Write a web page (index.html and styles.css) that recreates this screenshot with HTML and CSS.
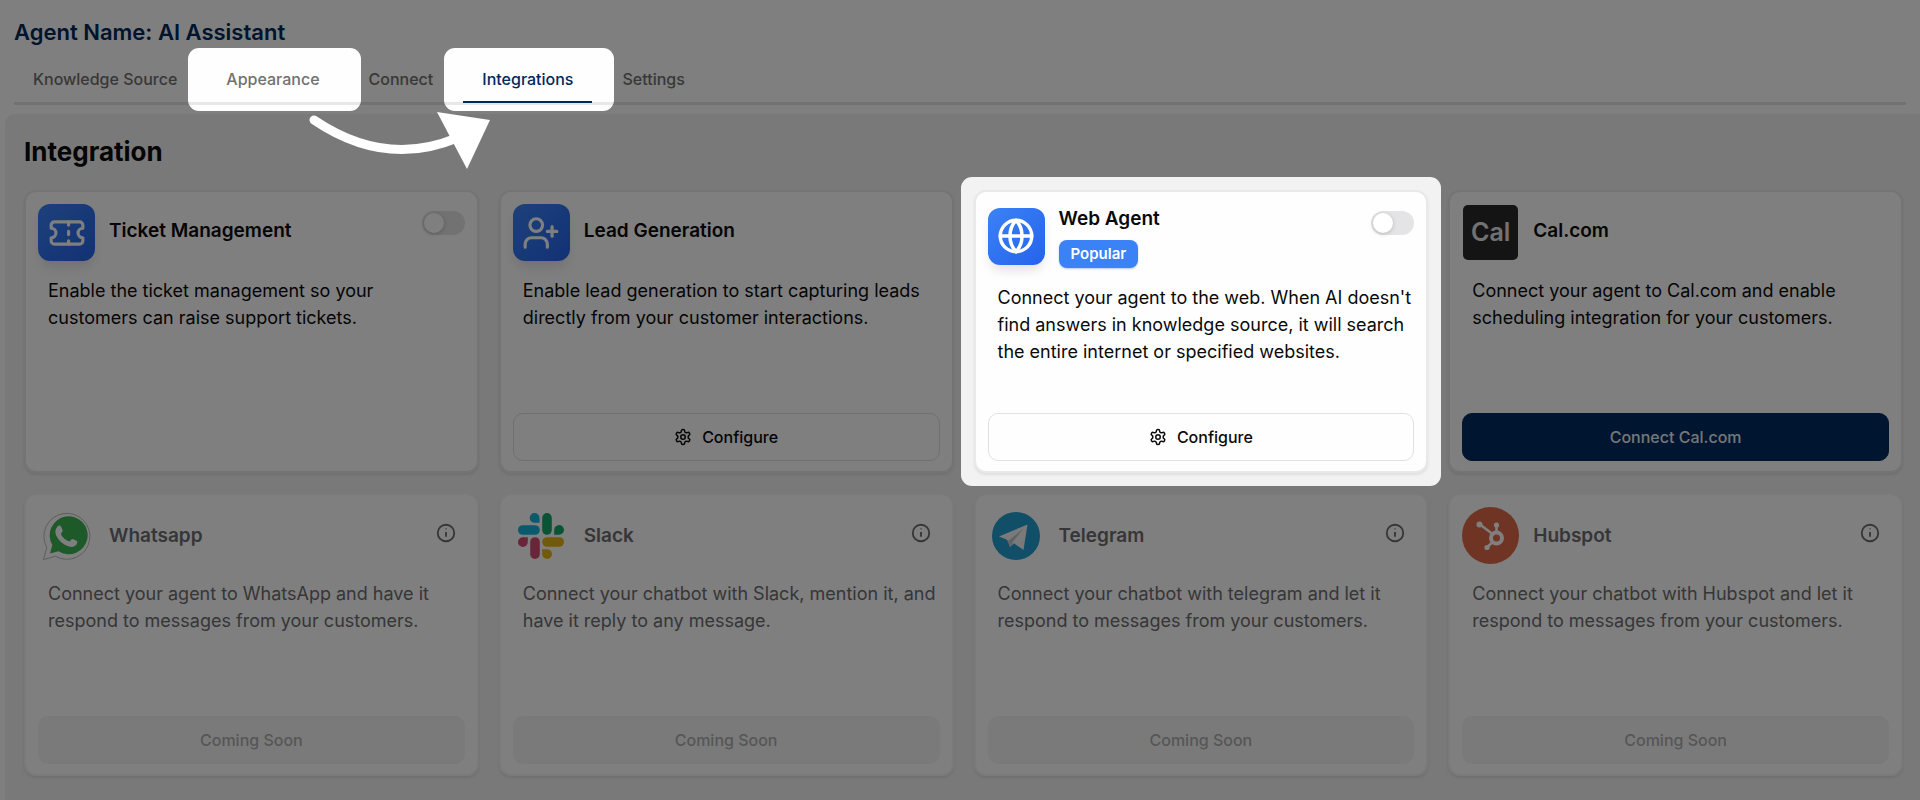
FILE: index.html
```html
<!DOCTYPE html>
<html lang="en">
<head>
    <meta charset="UTF-8">
    <meta name="viewport" content="width=device-width, initial-scale=1.0">
    <title>AI Assistant - Integrations</title>
    <link rel="stylesheet" href="styles.css">
</head>
<body>
    <div class="page">
        <header class="top">
            <h1>Agent Name: AI Assistant</h1>
            <nav class="tabs">
                <a href="#knowledge" class="tab">Knowledge Source</a>
                <a href="#appearance" class="tab lit">Appearance</a>
                <a href="#connect" class="tab">Connect</a>
                <a href="#integrations" class="tab lit active">Integrations</a>
                <a href="#settings" class="tab">Settings</a>
                <svg class="arrow" width="190" height="64" viewBox="0 0 190 64" fill="#fff" aria-hidden="true">
                    <path d="M9 12Q80 60 152 30" fill="none" stroke="#fff" stroke-width="9" stroke-linecap="round"/>
                    <path d="M132 4L185 12L162 61Z"/>
                </svg>
            </nav>
        </header>

        <main class="panel">
            <h2>Integration</h2>
            <div class="grid">
                <section class="card">
                    <div class="card-head">
                        <span class="icon blue">
                            <svg class="line" width="38" height="38" viewBox="0 0 24 24"><path d="M2 9a3 3 0 0 1 0 6v2a2 2 0 0 0 2 2h16a2 2 0 0 0 2-2v-2a3 3 0 0 1 0-6V7a2 2 0 0 0-2-2H4a2 2 0 0 0-2 2Z"/><path d="M13 5v2M13 17v2M13 11v2"/></svg>
                        </span>
                        <h3>Ticket Management</h3>
                        <input type="checkbox" class="toggle" aria-label="Enable Ticket Management">
                    </div>
                    <p>Enable the ticket management so your customers can raise support tickets.</p>
                </section>

                <section class="card">
                    <div class="card-head">
                        <span class="icon blue">
                            <svg class="line" width="38" height="38" viewBox="0 0 24 24"><path d="M16 21v-2a4 4 0 0 0-4-4H6a4 4 0 0 0-4 4v2"/><circle cx="9" cy="7" r="4"/><path d="M19 8v6M22 11h-6"/></svg>
                        </span>
                        <h3>Lead Generation</h3>
                    </div>
                    <p>Enable lead generation to start capturing leads directly from your customer interactions.</p>
                    <button type="button" class="btn">
                        <svg class="gear" width="18" height="18" viewBox="0 0 24 24"><path d="M12.22 2h-.44a2 2 0 0 0-2 2v.18a2 2 0 0 1-1 1.73l-.43.25a2 2 0 0 1-2 0l-.15-.08a2 2 0 0 0-2.73.73l-.22.38a2 2 0 0 0 .73 2.73l.15.1a2 2 0 0 1 1 1.72v.51a2 2 0 0 1-1 1.74l-.15.09a2 2 0 0 0-.73 2.73l.22.38a2 2 0 0 0 2.73.73l.15-.08a2 2 0 0 1 2 0l.43.25a2 2 0 0 1 1 1.73V20a2 2 0 0 0 2 2h.44a2 2 0 0 0 2-2v-.18a2 2 0 0 1 1-1.73l.43-.25a2 2 0 0 1 2 0l.15.08a2 2 0 0 0 2.73-.73l.22-.39a2 2 0 0 0-.73-2.73l-.15-.08a2 2 0 0 1-1-1.74v-.5a2 2 0 0 1 1-1.74l.15-.09a2 2 0 0 0 .73-2.73l-.22-.38a2 2 0 0 0-2.73-.73l-.15.08a2 2 0 0 1-2 0l-.43-.25a2 2 0 0 1-1-1.73V4a2 2 0 0 0-2-2z"/><circle cx="12" cy="12" r="3"/></svg>
                        Configure
                    </button>
                </section>

                <div class="spotlight">
                    <section class="card">
                        <div class="card-head">
                            <span class="icon blue">
                                <svg class="line" width="42" height="42" viewBox="0 0 24 24"><circle cx="12" cy="12" r="9"/><path d="M3 12h18M12 3c-4.600 5-4.600 13 0 18M12 3c4.600 5 4.600 13 0 18"/></svg>
                            </span>
                            <div class="title-stack">
                                <h3>Web Agent</h3>
                                <span class="badge">Popular</span>
                            </div>
                            <input type="checkbox" class="toggle" aria-label="Enable Web Agent">
                        </div>
                        <p>Connect your agent to the web. When AI doesn't find answers in knowledge source, it will search the entire internet or specified websites.</p>
                        <button type="button" class="btn">
                            <svg class="gear" width="18" height="18" viewBox="0 0 24 24"><path d="M12.22 2h-.44a2 2 0 0 0-2 2v.18a2 2 0 0 1-1 1.73l-.43.25a2 2 0 0 1-2 0l-.15-.08a2 2 0 0 0-2.73.73l-.22.38a2 2 0 0 0 .73 2.73l.15.1a2 2 0 0 1 1 1.72v.51a2 2 0 0 1-1 1.74l-.15.09a2 2 0 0 0-.73 2.73l.22.38a2 2 0 0 0 2.73.73l.15-.08a2 2 0 0 1 2 0l.43.25a2 2 0 0 1 1 1.73V20a2 2 0 0 0 2 2h.44a2 2 0 0 0 2-2v-.18a2 2 0 0 1 1-1.73l.43-.25a2 2 0 0 1 2 0l.15.08a2 2 0 0 0 2.73-.73l.22-.39a2 2 0 0 0-.73-2.73l-.15-.08a2 2 0 0 1-1-1.74v-.5a2 2 0 0 1 1-1.74l.15-.09a2 2 0 0 0 .73-2.73l-.22-.38a2 2 0 0 0-2.73-.73l-.15.08a2 2 0 0 1-2 0l-.43-.25a2 2 0 0 1-1-1.73V4a2 2 0 0 0-2-2z"/><circle cx="12" cy="12" r="3"/></svg>
                            Configure
                        </button>
                    </section>
                </div>

                <section class="card">
                    <div class="card-head">
                        <span class="icon"><span class="cal">Cal</span></span>
                        <h3>Cal.com</h3>
                    </div>
                    <p>Connect your agent to Cal.com and enable scheduling integration for your customers.</p>
                    <button type="button" class="btn primary">Connect Cal.com</button>
                </section>

                <section class="card soon">
                    <div class="card-head">
                        <span class="icon">
                            <svg width="48" height="48" viewBox="0 0 48 48">
                                <path d="M.5 47.500L3.800 35.500A23 23 0 1 1 12.500 44.300Z" fill="#fff" stroke="#bcbcbc" stroke-width="1"/>
                                <path d="M7 41.500l2.300-8.600A19 19 0 1 1 15.500 39.300Z" fill="#3cb553"/>
                                <path d="M14.500 14.500c1.500-1.700 3-1.200 3.500-.1l1.700 4c.4 1-1.700 2.700-1.900 3.600 1.900 3.800 4.600 6.100 8.500 7.500 1-.3 2.300-2.900 3.400-2.500l4.200 2.100c1 .6.100 3.400-1.400 4.500-2.800 2-5.600 1.400-9.100-.1-5.300-2.300-9.300-7-10.700-11.500-.7-2.700-.2-5.500 1.800-7.500z" fill="#fff"/>
                            </svg>
                        </span>
                        <h3>Whatsapp</h3>
                        <svg class="info" width="22" height="22" viewBox="0 0 24 24"><circle cx="12" cy="12" r="9"/><path d="M12 11v5M12 7v1"/></svg>
                    </div>
                    <p>Connect your agent to WhatsApp and have it respond to messages from your customers.</p>
                    <button type="button" class="btn" disabled>Coming Soon</button>
                </section>

                <section class="card soon">
                    <div class="card-head">
                        <span class="icon">
                            <svg width="46" height="46" viewBox="0 0 46 46">
                                <g fill="#16b2d8"><path d="M21.500 9.800h-4.800a4.900 4.900 0 1 1 4.800-4.900z"/><rect y="12.200" width="21.800" height="9.600" rx="4.800"/></g>
                                <g fill="#12a868"><path d="M36.200 21.800V17a4.900 4.900 0 1 1 4.900 4.800z"/><rect x="24.200" width="9.600" height="21.800" rx="4.800"/></g>
                                <g fill="#e3b616"><path d="M24.200 36.200H29a4.900 4.900 0 1 1-4.800 4.900z"/><rect x="24.200" y="24.200" width="21.800" height="9.600" rx="4.800"/></g>
                                <g fill="#d24c72"><path d="M9.800 24.200V29a4.900 4.900 0 1 1-4.900-4.800z"/><rect x="12.200" y="24.200" width="9.600" height="21.800" rx="4.800"/></g>
                            </svg>
                        </span>
                        <h3>Slack</h3>
                        <svg class="info" width="22" height="22" viewBox="0 0 24 24"><circle cx="12" cy="12" r="9"/><path d="M12 11v5M12 7v1"/></svg>
                    </div>
                    <p>Connect your chatbot with Slack, mention it, and have it reply to any message.</p>
                    <button type="button" class="btn" disabled>Coming Soon</button>
                </section>

                <section class="card soon">
                    <div class="card-head">
                        <span class="icon">
                            <svg width="48" height="48" viewBox="0 0 48 48">
                                <circle cx="24" cy="24" r="24" fill="#229dcf"/>
                                <path d="M14 26l4 9 6-5z" fill="#b9cbd8"/>
                                <path d="M7 24.500L35.500 12.500 31.500 38 21.500 31 18 35 17 28.500z" fill="#f4f4f4"/>
                                <path d="M17 28.500L32 16 20.500 30 18.500 35.500z" fill="#b9c4cc"/>
                            </svg>
                        </span>
                        <h3>Telegram</h3>
                        <svg class="info" width="22" height="22" viewBox="0 0 24 24"><circle cx="12" cy="12" r="9"/><path d="M12 11v5M12 7v1"/></svg>
                    </div>
                    <p>Connect your chatbot with telegram and let it respond to messages from your customers.</p>
                    <button type="button" class="btn" disabled>Coming Soon</button>
                </section>

                <section class="card soon">
                    <div class="card-head">
                        <span class="icon">
                            <svg width="57" height="57" viewBox="0 0 57 57">
                                <circle cx="28.500" cy="28.500" r="28.500" fill="#e0694b"/>
                                <g fill="none" stroke="#fff">
                                    <circle cx="34.500" cy="31" r="5.500" stroke-width="4"/>
                                    <path d="M18 17.500L30.500 27M34.500 18v8M30 35.500L25 40.500" stroke-width="2.500"/>
                                </g>
                                <g fill="#fff"><circle cx="17.500" cy="17.500" r="3"/><circle cx="34.500" cy="18" r="2.600"/><circle cx="25" cy="40.500" r="2.600"/></g>
                            </svg>
                        </span>
                        <h3>Hubspot</h3>
                        <svg class="info" width="22" height="22" viewBox="0 0 24 24"><circle cx="12" cy="12" r="9"/><path d="M12 11v5M12 7v1"/></svg>
                    </div>
                    <p>Connect your chatbot with Hubspot and let it respond to messages from your customers.</p>
                    <button type="button" class="btn" disabled>Coming Soon</button>
                </section>
            </div>
        </main>
    </div>
</body>
</html>
```
FILE: styles.css
```css
* {
    box-sizing: border-box;
}
body {
    margin: 0;
    font-family: Inter, "Open Sans", sans-serif;
    color: #0a0a0a;
    background: #fefefe;
}
h1, h2, h3, p {
    margin: 0;
}
.page {
    position: relative;
    min-height: 100vh;
    display: flex;
    flex-direction: column;
}
/* dims everything that is not spotlighted */
.page::after {
    content: "";
    position: absolute;
    inset: 0;
    background: rgba(0, 0, 0, 0.5);
    z-index: 1;
}

.top {
    padding: 16px 14px 9px;
}
.top h1 {
    font-size: 22px;
    line-height: 32px;
    font-weight: 600;
    color: #00285c;
}
.tabs {
    position: relative;
    display: flex;
    gap: 11px;
    margin-top: 8px;
    border-bottom: 3px solid #e4e4e4;
}
.tab {
    position: relative;
    padding: 11px 19px;
    font-size: 16px;
    line-height: 24px;
    font-weight: 500;
    color: #717171;
    text-decoration: none;
}
.tab.lit {
    z-index: 2;
}
.tab.lit::before {
    content: "";
    position: absolute;
    inset: -8px -22px -9px -19px;
    z-index: -1;
    border-radius: 11px;
    background: linear-gradient(#e8e8e8, #e8e8e8) 0 calc(100% - 6px) / 100% 3px no-repeat #fefefe;
}
.tab.active {
    color: #00285c;
}
.tab.active::after {
    content: "";
    position: absolute;
    left: 0;
    right: 0;
    bottom: -1px;
    height: 2px;
    background: #002b57;
}
.arrow {
    position: absolute;
    left: 291px;
    top: 52px;
    z-index: 3;
}

.panel {
    flex: 1;
    margin-left: 5px;
    padding: 20px 17px 24px 19px;
    background: #f2f2f2;
    border-radius: 10px 0 0 0;
}
.panel h2 {
    font-size: 26px;
    line-height: 36px;
    font-weight: 700;
}
.grid {
    display: grid;
    grid-template-columns: repeat(4, minmax(0, 1fr));
    grid-auto-rows: minmax(283px, auto);
    gap: 20px;
    margin-top: 20px;
}
.card {
    display: flex;
    flex-direction: column;
    height: 100%;
    padding: 12px 12px 10px;
    border: 2px solid #e9e9eb;
    border-radius: 12px;
    background: #fefefe;
    box-shadow: 0 2px 3px rgba(0, 0, 0, 0.08);
}
.spotlight {
    position: relative;
    z-index: 2;
}
.spotlight::before {
    content: "";
    position: absolute;
    inset: -13px;
    z-index: -1;
    border-radius: 11px;
    background: #f2f2f2;
}

.card-head {
    display: flex;
    align-items: center;
    gap: 14px;
    min-height: 57px;
}
.card-head h3 {
    font-size: 19px;
    line-height: 30px;
    font-weight: 600;
}
.card-head > h3 {
    padding-bottom: 4px;
}
.icon {
    display: flex;
    align-items: center;
    justify-content: center;
    flex: none;
    width: 57px;
    height: 57px;
}
.blue {
    border-radius: 12px;
    background: linear-gradient(135deg, #3b82f6, #2563eb);
    box-shadow: 0 8px 12px -3px rgba(0, 0, 0, 0.12);
}
.line {
    fill: none;
    stroke: #fff;
    stroke-width: 2;
    stroke-linecap: round;
    stroke-linejoin: round;
}
.cal {
    width: 55px;
    height: 55px;
    border-radius: 5px;
    background: #292929;
    color: #e4e4e4;
    font-size: 25px;
    line-height: 55px;
    font-weight: 600;
    text-align: center;
}
.title-stack {
    display: flex;
    flex-direction: column;
    align-items: flex-start;
    gap: 6px;
}
.badge {
    padding: 0 12px;
    border-radius: 8px;
    background: #3b82f6;
    color: #fff;
    font-size: 15px;
    line-height: 28px;
    font-weight: 600;
    box-shadow: 0 1px 2px rgba(59, 130, 246, 0.4);
}
.toggle {
    appearance: none;
    align-self: flex-start;
    width: 43px;
    height: 24px;
    margin: 7px 0 0 auto;
    padding: 2px;
    border-radius: 12px;
    background: #e4e4e7;
}
.toggle::before {
    content: "";
    display: block;
    width: 20px;
    height: 20px;
    border-radius: 50%;
    background: #fff;
    box-shadow: 0 1px 4px rgba(0, 0, 0, 0.2);
}
.toggle:checked {
    background: #2563eb;
}
.toggle:checked::before {
    margin-left: auto;
}
.info {
    align-self: flex-start;
    margin: 15px 8px 0 auto;
    fill: none;
    stroke: #171717;
    stroke-width: 2;
}

.card p {
    padding: 16px 0 0 10px;
    font-size: 18px;
    line-height: 27px;
}
.btn {
    display: flex;
    align-items: center;
    justify-content: center;
    gap: 10px;
    height: 48px;
    margin-top: auto;
    border: 1px solid #e1e1e4;
    border-radius: 10px;
    background: #fefefe;
    color: #0a0a0a;
    font-family: inherit;
    font-size: 16px;
    font-weight: 500;
}
.gear {
    fill: none;
    stroke: currentColor;
    stroke-width: 2;
}
.btn.primary {
    border-color: #002b5e;
    background: #002b5e;
    color: #e8edf3;
}
.soon {
    border-color: #f4f4f5;
}
.soon h3, .soon p {
    color: #6d6d70;
}
.soon .card-head > h3 {
    padding-bottom: 0;
}
.soon .info {
    stroke: #6d6d70;
}
.btn:disabled {
    border-color: #f5f5f5;
    background: #f5f5f5;
    color: #adadad;
}
```
